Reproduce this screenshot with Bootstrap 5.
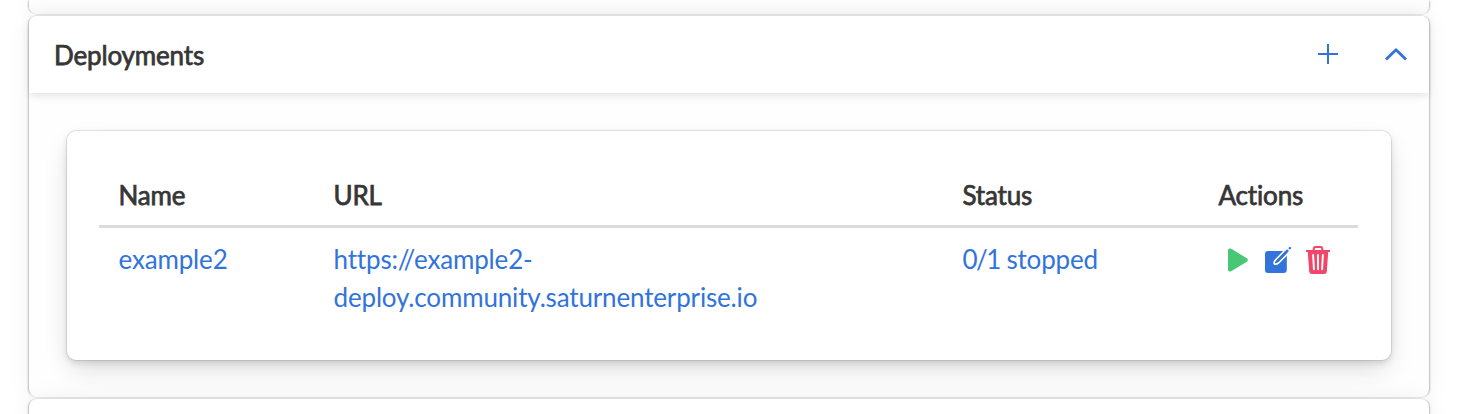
<!DOCTYPE html>
<html lang="en">
<head>
<meta charset="utf-8">
<meta name="viewport" content="width=device-width, initial-scale=1">
<title>Deployments</title>
<link rel="stylesheet" href="https://cdn.jsdelivr.net/npm/bootstrap@5.3.0/dist/css/bootstrap.min.css">
<style>
  body { font-family: Lato, sans-serif; font-size: 26px; letter-spacing: -.16px; line-height: 38px; font-variant-ligatures: none; color: #363636; height: 414px; }
  .page { padding: 0 28px 0 29px; height: 414px; }
  .card { border: 0; border-radius: 8px; }
  .panel { box-shadow: 0 0 26px -2px rgba(10,10,10,.07), 2px 0 2px -1px rgba(10,10,10,.2), -2px 0 2px -1px rgba(10,10,10,.2), 0 0 0 1px rgba(10,10,10,.06); margin: 0 0 2px; }
  .panel-prev { height: 14px; border-radius: 0 0 8px 8px; background: linear-gradient(#fefefe, #fafafa); }
  .panel-main { height: 381px; background: #fefefe; }
  .panel-next { height: 60px; }
  .panel-head { height: 77px; padding: 0 21px 2px 25px; background: #fff; border: 0; box-shadow: 0 3px 8px -1px rgba(10,10,10,.13); }
  .panel .panel-head { border-radius: 8px 8px 0 0; }
  .strong { font-weight: 400; -webkit-text-stroke: .75px #363636; }
  .panel-head .strong { padding-top: 2px; }
  .inner { margin: 38px 38px 0; height: 229px; padding: 38px 33px 0 32px; border-radius: 9px;
    box-shadow: 0 12px 28px -4px rgba(10,10,10,.14), 0 3px 7px rgba(10,10,10,.13), 0 0 0 1px rgba(10,10,10,.09); }
  .table { table-layout: fixed; --bs-table-bg: transparent; margin: 0; color: inherit; }
  .table th { padding: 7px 20px 11px 19.5px; border-bottom: 3px solid #dbdbdb; }
  .table td { padding: 12px 20px 12px 19.5px; border: 0; vertical-align: top; }
  .table a, .panel-head a { color: #3273dc; text-decoration: none; }
  .count { letter-spacing: -1.5px; }
  .actions { margin-left: 9.5px; height: 40px; }
  .add { margin-right: 46px; }
  .gap-icon { margin-left: 14px; }
  svg { display: block; }
</style>
</head>
<body class="overflow-hidden">
<main class="page overflow-hidden">
  <section class="card panel panel-prev"></section>
  <section class="card panel panel-main">
    <header class="card-header panel-head d-flex align-items-center justify-content-between">
      <span class="strong">Deployments</span>
      <div class="d-flex align-items-center">
        <a href="#" aria-label="Add" class="add"><svg width="20" height="20" viewBox="0 0 20 20" fill="none" stroke="currentColor" stroke-width="2"><path d="M0 10H20M10 0V20"/></svg></a>
        <a href="#" aria-label="Collapse"><svg width="24" height="24" viewBox="0 0 24 24" fill="none" stroke="currentColor" stroke-width="2.9" stroke-linecap="butt" stroke-linejoin="round"><path d="M2 17.5L12 7.7L22 17.5"/></svg></a>
      </div>
    </header>
    <div class="card inner">
      <table class="table">
        <colgroup><col style="width:215px"><col style="width:629px"><col style="width:256px"><col></colgroup>
        <thead><tr><th class="strong">Name</th><th class="strong">URL</th><th class="strong">Status</th><th class="strong">Actions</th></tr></thead>
        <tbody><tr>
          <td><a href="#">example2</a></td>
          <td><a href="#">https://example2-<br>deploy.community.saturnenterprise.io</a></td>
          <td><a href="#"><span class="count">0/1</span> stopped</a></td>
          <td>
            <div class="d-flex align-items-center actions">
              <svg width="20" height="24" viewBox="0 0 20 24" fill="#48c774" role="img" aria-label="Start"><path d="M0 2.5Q0 .3 2.2 .6L4 1.3L18.8 10.2Q21 12 18.8 13.8L4 22.7L2.2 23.4Q0 23.7 0 21.5Z"/></svg>
              <svg class="ms-3" width="28" height="28" viewBox="0 0 28 28" role="img" aria-label="Edit"><path fill="#3273dc" d="M4 5H19.5L22.8 8.3V23.7Q22.8 27 19.5 27H4Q1 27 1 23.7V8.3Q1 5 4 5Z"/><path d="M20.4 4.9L11.2 14.4Q9.5 16.4 10.4 17.9Q12.3 18.7 14.4 17L24 7.3" fill="#3273dc" stroke="#fff" stroke-width="1.7"/><path d="M24 4.2L13.3 15.2" stroke="#3273dc" stroke-width="2.6"/><path d="M24.7 2.2L26.1 1.2L26.8 1.9L26 3.2Z" fill="#3273dc" stroke="#3273dc"/></svg>
              <svg class="gap-icon" width="24" height="28" viewBox="0 0 24 28" fill="none" stroke="#f14668" role="img" aria-label="Delete"><path stroke-width="2" d="M0 5H24M7.7 5V3Q7.7 1 9.7 1H14.3Q16.3 1 16.3 3V5"/><path fill="#f14668" stroke="none" d="M1.7 5H22.3L20.8 25.5Q20.6 28 18 28H6Q3.4 28 3.2 25.5Z"/><path stroke="#fff" stroke-width="1.9" stroke-linecap="round" d="M7.1 9L7.9 23.3M12 9V23.3M16.9 9L16.1 23.3"/></svg>
            </div>
          </td>
        </tr></tbody>
      </table>
    </div>
  </section>
  <section class="card panel panel-next"></section>
</main>
<script src="https://cdn.jsdelivr.net/npm/bootstrap@5.3.0/dist/js/bootstrap.bundle.min.js"></script>
</body>
</html>
